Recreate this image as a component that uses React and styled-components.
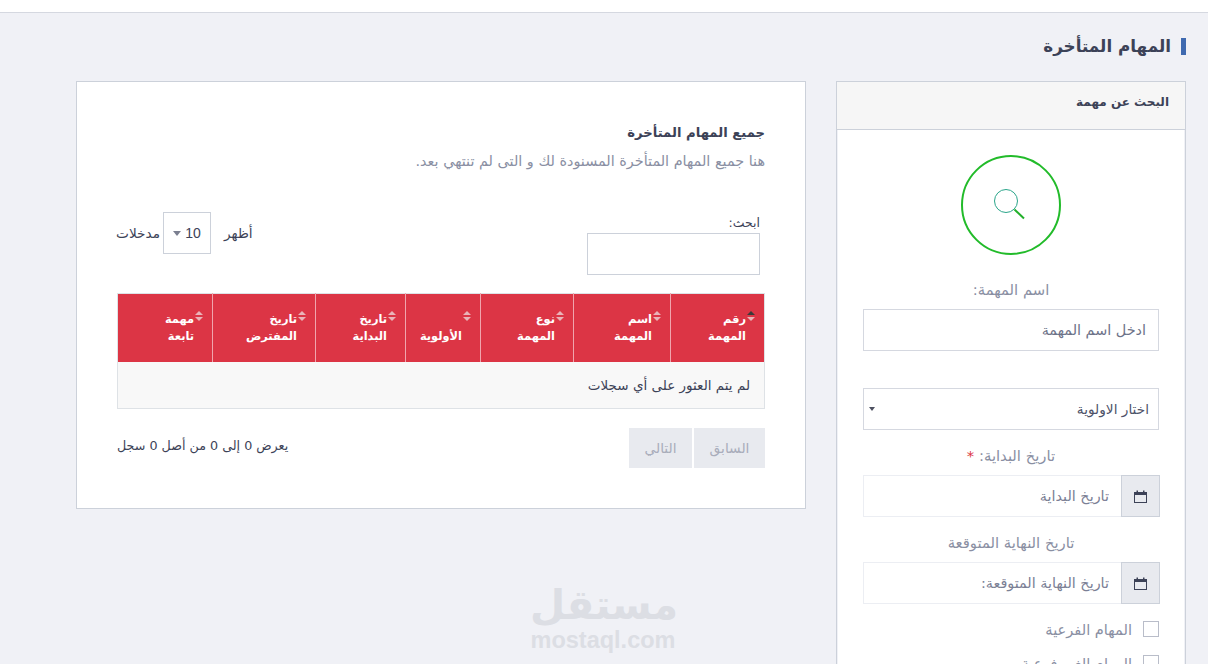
import React from "react";
import styled, { createGlobalStyle } from "styled-components";

const FONT = `"DejaVu Sans", sans-serif`;

const GlobalStyle = createGlobalStyle`
  html, body {
    margin: 0;
    height: 100%;
    overflow: hidden;
    background: #f0f1f6;
  }
  * { box-sizing: border-box; }
`;

const Page = styled.div`
  position: relative;
  height: 664px;
  overflow: hidden;
  direction: rtl;
  font-family: ${FONT};
  color: #3c4257;
`;

const TopBar = styled.div`
  height: 13px;
  background: #fff;
  border-bottom: 1px solid #d5d8e0;
`;

const Content = styled.div`
  padding: 25px 22px 0 0;
`;

const PageTitle = styled.h1`
  margin: 0 0 26px;
  height: 17px;
  padding-right: 10px;
  border-right: 5px solid #3f6ab0;
  font-size: 16.8px;
  font-weight: 700;
  line-height: 17px;
  color: #3c4257;
`;

const Columns = styled.div`
  display: flex;
  align-items: flex-start;
  gap: 30px;
`;

const SearchPanel = styled.section`
  flex: 0 0 350px;
  border: 1px solid #ccd1da;
  border-bottom: 0;
  height: 640px;
`;

const SearchHeader = styled.div`
  height: 48px;
  padding: 0 16px 8px;
  display: flex;
  align-items: center;
  background: #f6f6f6;
  border-bottom: 1px solid #ccd1da;
  font-size: 12px;
  font-weight: 700;
`;

const SearchBody = styled.div`
  height: 100%;
  margin: 0 1px;
  padding: 25px 25px 0 25px;
  background: #fff;
  display: flex;
  flex-direction: column;
  align-items: stretch;
`;

const Circle = styled.div`
  align-self: center;
  width: 100px;
  height: 100px;
  flex: none;
  margin-bottom: 25px;
  border: 2px solid #22bb2a;
  border-radius: 50%;
  display: flex;
  align-items: center;
  justify-content: center;
`;

const FieldLabel = styled.label`
  display: block;
  text-align: center;
  font-size: 14.8px;
  line-height: 20px;
  color: #8a8fa3;
  margin-bottom: ${p => p.$gap}px;
`;

const Required = styled.span`
  color: #dc3545;
`;

const TextField = styled.div`
  height: 42px;
  padding: 0 12px;
  display: flex;
  align-items: center;
  background: #fff;
  border: 1px solid #d5d8e0;
  font-size: 14.4px;
  color: #6d7288;
  margin-bottom: ${p => p.$gap}px;
`;

const SelectField = styled(TextField)`
  justify-content: space-between;
  padding: 0 9px 0 5px;
  font-size: 13.7px;
  color: #4d5268;
`;

const Caret = styled.span`
  width: 0;
  height: 0;
  border-left: ${p => p.$size || 3}px solid transparent;
  border-right: ${p => p.$size || 3}px solid transparent;
  border-top: ${p => (p.$size || 3) + 1}px solid ${p => p.$color || "#4d5060"};
`;

const DateGroup = styled.div`
  height: 42px;
  margin-right: -1px;
  display: flex;
  margin-bottom: ${p => p.$gap}px;
`;

const DateAddon = styled.div`
  flex: 0 0 39px;
  display: flex;
  align-items: center;
  justify-content: center;
  background: #e8eaef;
  border: 1px solid #ccd1da;
`;

const DateInput = styled.div`
  flex: 1;
  padding: 0 12px;
  display: flex;
  align-items: center;
  border: 1px solid #eceef3;
  border-right: 0;
  font-size: 14.4px;
  color: #7b8095;
`;

const CheckRow = styled.div`
  display: flex;
  align-items: center;
  gap: 11px;
  height: 16px;
  margin-bottom: 18px;
  font-size: 14.6px;
  color: #8a8fa3;
`;

const CheckBox = styled.span`
  flex: none;
  width: 16px;
  height: 16px;
  border: 1px solid #b9bdc9;
  background: #fff;
`;

const TablePanel = styled.section`
  flex: 0 0 729px;
  height: 428px;
  padding: 40px 40px 0 40px;
  background: #fff;
  border: 1px solid #ccd1da;
`;

const CardTitle = styled.h2`
  margin: 0 0 7px;
  font-size: 13.2px;
  line-height: 22px;
  font-weight: 700;
  color: #3c4257;
`;

const CardText = styled.p`
  margin: 0;
  font-size: 14.4px;
  line-height: 20px;
  color: #8a8fa3;
`;

const Controls = styled.div`
  margin-top: 41px;
  height: 81px;
  display: flex;
  justify-content: space-between;
  font-size: 14px;
`;

const SearchBox = styled.div`
  width: 178px;
  padding-top: 3px;
  padding-right: 5px;
`;

const SearchLabel = styled.div`
  font-size: 12.5px;
  line-height: 15px;
  color: #3c4257;
`;

const SearchInput = styled.div`
  height: 42px;
  margin-top: 3px;
  border: 1px solid #ccd1da;
`;

const LengthBox = styled.div`
  display: flex;
  align-items: center;
  height: 42px;
  margin-left: -1px;
`;

const LengthText = styled.span`
  font-size: 13.7px;
`;

const LengthSelect = styled.div`
  width: 48px;
  height: 42px;
  margin: 0 13px 0 3px;
  display: flex;
  flex-direction: row-reverse;
  align-items: center;
  justify-content: center;
  gap: 4px;
  border: 1px solid #ccd1da;
  font-family: "Liberation Sans", sans-serif;
  font-size: 14px;
`;

const Table = styled.table`
  width: 647px;
  height: 116px;
  table-layout: fixed;
  border-collapse: collapse;
  border: 1px solid #dee2e6;
`;

const HeadCell = styled.th`
  position: relative;
  width: ${p => p.$width}px;
  height: 68px;
  padding: 0 18px 17px 8px;
  background: #dc3545;
  border-left: 1px solid #f0a5ad;
  color: #fff;
  font-size: 11.4px;
  font-weight: 700;
  line-height: 17px;
  text-align: right;
  vertical-align: bottom;
  &:last-child { border-left: 0; }
`;

const HeadText = styled.span`
  display: block;
  width: min-content;
`;

const SortIcon = styled.span`
  position: absolute;
  top: 17px;
  right: 9px;
  display: flex;
  flex-direction: column;
  gap: 2px;
`;

const SortArrow = styled.span`
  width: 0;
  height: 0;
  border-left: 4px solid transparent;
  border-right: 4px solid transparent;
  ${p => p.$up ? "border-bottom" : "border-top"}: 4px solid ${p => p.$color};
`;

const EmptyCell = styled.td`
  height: 46px;
  padding: 0 14px;
  background: #f8f8f8;
  font-size: 13.5px;
  color: #3c4257;
`;

const Footer = styled.div`
  margin-top: 19px;
  display: flex;
  justify-content: space-between;
  align-items: center;
  font-size: 12.7px;
`;

const FooterInfo = styled.span`
  margin-bottom: 6px;
`;

const Pager = styled.div`
  display: flex;
  gap: 2px;
`;

const PageButton = styled.div`
  width: ${p => p.$width}px;
  height: 40px;
  display: flex;
  align-items: center;
  justify-content: center;
  background: #e8eaef;
  font-size: 13.8px;
  color: #a9adbb;
`;

const Watermark = styled.div`
  position: absolute;
  left: 530px;
  top: 582px;
  width: 146px;
  direction: ltr;
  text-align: center;
  color: #dcdee4;
  font-weight: 700;
  pointer-events: none;
`;

const WatermarkArabic = styled.div`
  font-size: 40.5px;
  line-height: 46px;
  white-space: nowrap;
`;

const WatermarkLatin = styled.div`
  font-family: "Liberation Sans", sans-serif;
  font-size: 23.5px;
  line-height: 24px;
`;

const columns = [
  { width: 94, title: "رقم المهمة", active: true },
  { width: 97, title: "اسم المهمة" },
  { width: 93, title: "نوع المهمة" },
  { width: 75, title: "الأولوية" },
  { width: 90, title: "تاريخ البداية" },
  { width: 103, title: "تاريخ المفترض" },
  { width: 95, title: "مهمة تابعة" },
];

const SearchGlyph = () => (
  <svg width="36" height="36" viewBox="0 0 36 36" fill="none" style={{ marginRight: "2px" }}>
    <circle cx="14" cy="14" r="11.5" stroke="#2aa58a" strokeWidth="1" />
    <path d="M22.5 22.5 L32 31.5" stroke="#22b02a" strokeWidth="2" />
  </svg>
);

const CalendarGlyph = () => (
  <svg width="13" height="13" viewBox="0 0 13 13" fill="none">
    <rect x="0.5" y="2.5" width="12" height="10" stroke="#3c4257" />
    <rect x="0" y="2" width="13" height="3" fill="#3c4257" />
    <rect x="2.5" y="0.5" width="1.5" height="2" fill="#3c4257" />
    <rect x="9" y="0.5" width="1.5" height="2" fill="#3c4257" />
  </svg>
);

const App = () => (
  <Page>
    <GlobalStyle />
    <TopBar />
    <Content>
      <PageTitle>المهام المتأخرة</PageTitle>
      <Columns>
        <SearchPanel>
          <SearchHeader>البحث عن مهمة</SearchHeader>
          <SearchBody>
            <Circle>
              <SearchGlyph />
            </Circle>
            <FieldLabel $gap={9}>اسم المهمة:</FieldLabel>
            <TextField $gap={37}>ادخل اسم المهمة</TextField>
            <SelectField $gap={16}>
              <span>اختار الاولوية</span>
              <Caret />
            </SelectField>
            <FieldLabel $gap={9}>
              تاريخ البداية: <Required>*</Required>
            </FieldLabel>
            <DateGroup $gap={16}>
              <DateAddon>
                <CalendarGlyph />
              </DateAddon>
              <DateInput>تاريخ البداية</DateInput>
            </DateGroup>
            <FieldLabel $gap={9}>تاريخ النهاية المتوقعة</FieldLabel>
            <DateGroup $gap={17}>
              <DateAddon>
                <CalendarGlyph />
              </DateAddon>
              <DateInput>تاريخ النهاية المتوقعة:</DateInput>
            </DateGroup>
            <CheckRow>
              <CheckBox />
              المهام الفرعية
            </CheckRow>
            <CheckRow>
              <CheckBox />
              المهام الغير فرعية
            </CheckRow>
          </SearchBody>
        </SearchPanel>

        <TablePanel>
          <CardTitle>جميع المهام المتأخرة</CardTitle>
          <CardText>هنا جميع المهام المتأخرة المسنودة لك و التى لم تنتهي بعد.</CardText>
          <Controls>
            <SearchBox>
              <SearchLabel>ابحث:</SearchLabel>
              <SearchInput />
            </SearchBox>
            <LengthBox>
              <LengthText>أظهر</LengthText>
              <LengthSelect>
                <Caret $size={4} $color="#7b7f90" />
                10
              </LengthSelect>
              <LengthText>مدخلات</LengthText>
            </LengthBox>
          </Controls>
          <Table>
            <thead>
              <tr>
                {columns.map(col => (
                  <HeadCell key={col.title} $width={col.width}>
                    <SortIcon>
                      <SortArrow $up $color={col.active ? "#3a3a3a" : "#e9b3b8"} />
                      <SortArrow $color="#e9b3b8" />
                    </SortIcon>
                    <HeadText>{col.title}</HeadText>
                  </HeadCell>
                ))}
              </tr>
            </thead>
            <tbody>
              <tr>
                <EmptyCell colSpan={7}>لم يتم العثور على أي سجلات</EmptyCell>
              </tr>
            </tbody>
          </Table>
          <Footer>
            <Pager>
              <PageButton $width={71}>السابق</PageButton>
              <PageButton $width={63}>التالي</PageButton>
            </Pager>
            <FooterInfo>يعرض 0 إلى 0 من أصل 0 سجل</FooterInfo>
          </Footer>
        </TablePanel>
      </Columns>
    </Content>
    <Watermark>
      <WatermarkArabic>مستقل</WatermarkArabic>
      <WatermarkLatin>mostaql.com</WatermarkLatin>
    </Watermark>
  </Page>
);

export default App;
